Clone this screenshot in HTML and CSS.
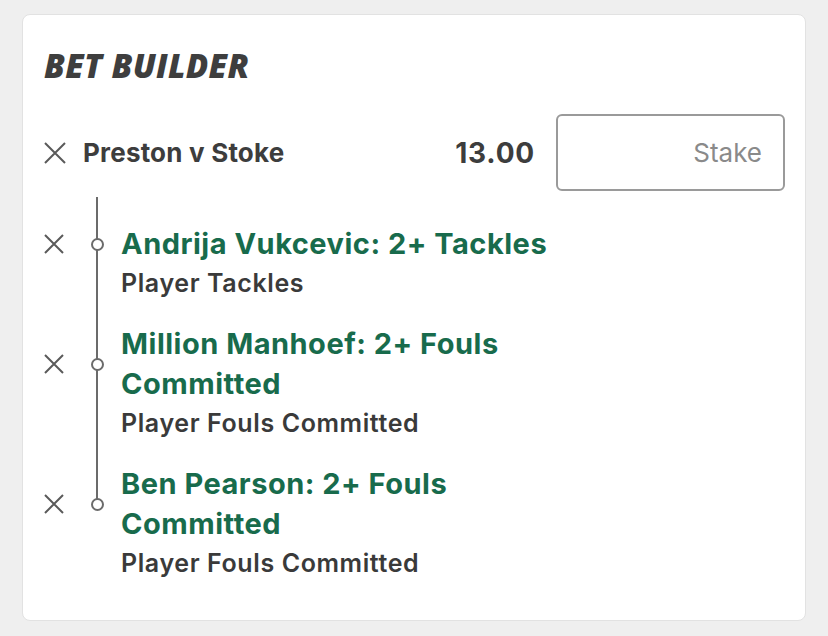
FILE: index.html
```html
<!DOCTYPE html>
<html lang="en">
<head>
<meta charset="utf-8">
<title>Bet Builder</title>
<link rel="stylesheet" href="styles.css">
</head>
<body>
<div class="card">
  <h1 class="title">BET BUILDER</h1>
  <div class="event">
    <svg class="x-icon x-lg" viewBox="0 0 22 22" aria-hidden="true"><path d="M1 1L21 21M21 1L1 21"/></svg>
    <span class="event-name">Preston v Stoke</span>
    <span class="odds">13.00</span>
    <div class="stake"><span class="stake-ph">Stake</span></div>
  </div>
  <div class="legs">
    <div class="leg">
      <svg class="x-icon x-sm" viewBox="0 0 20 20" aria-hidden="true"><path d="M1 1L19 19M19 1L1 19"/></svg>
      <span class="dot"></span>
      <div class="leg-title">Andrija Vukcevic: 2+ Tackles</div>
      <div class="leg-sub">Player Tackles</div>
    </div>
    <div class="leg">
      <svg class="x-icon x-sm" viewBox="0 0 20 20" aria-hidden="true"><path d="M1 1L19 19M19 1L1 19"/></svg>
      <span class="dot"></span>
      <div class="leg-title">Million Manhoef: 2+ Fouls Committed</div>
      <div class="leg-sub">Player Fouls Committed</div>
    </div>
    <div class="leg">
      <svg class="x-icon x-sm" viewBox="0 0 20 20" aria-hidden="true"><path d="M1 1L19 19M19 1L1 19"/></svg>
      <span class="dot"></span>
      <div class="leg-title">Ben Pearson: 2+ Fouls Committed</div>
      <div class="leg-sub">Player Fouls Committed</div>
    </div>
  </div>
</div>
</body>
</html>
```
FILE: styles.css
```css
* { box-sizing: border-box; }
html, body { margin: 0; }
body {
  background: #efefef;
  padding: 14px 22px 15px;
  font-family: Inter, "Noto Sans", sans-serif;
  color: #3d3d3d;
}
.card {
  background: #fff;
  border: 1px solid #e2e2e2;
  border-radius: 8px;
  padding: 34px 20px 38px 19px;
}
.title {
  margin: 0 0 0 2px;
  font-family: "Open Sans", sans-serif;
  font-style: italic;
  font-weight: 800;
  font-size: 33px;
  line-height: 33px;
  color: #3e3e3e;
  letter-spacing: 0.3px;
}
.event {
  margin-top: 32px;
  display: flex;
  align-items: center;
  height: 77px;
}
.x-icon path {
  fill: none;
  stroke: #5a5a5a;
  stroke-width: 2;
}
.x-lg { width: 22px; height: 22px; margin-left: 2px; flex: none; }
.event-name {
  margin-left: 17px;
  font-size: 26px;
  font-weight: 700;
  letter-spacing: 0.2px;
  flex: 1;
}
.odds {
  font-size: 28px;
  font-weight: 700;
  letter-spacing: 0.8px;
  margin-right: 21px;
}
.stake {
  width: 229px;
  height: 77px;
  border: 2px solid #9a9a9a;
  border-radius: 6px;
  display: flex;
  align-items: center;
  justify-content: flex-end;
  padding-right: 21px;
}
.stake-ph {
  font-size: 26px;
  color: #8a8a8a;
}
.legs {
  position: relative;
  margin-top: 6px;
  padding-top: 27px;
  display: flex;
  flex-direction: column;
  gap: 22px;
}
.legs::before {
  content: "";
  position: absolute;
  left: 54px;
  top: 0;
  bottom: 78px;
  width: 2px;
  background: #6b6b6b;
}
.leg {
  display: grid;
  grid-template-columns: 45px 20px 1fr;
  column-gap: 0;
}
.x-sm {
  grid-column: 1; grid-row: 1;
  width: 20px; height: 20px;
  margin-left: 2px;
  align-self: center;
}
.dot {
  grid-column: 2; grid-row: 1;
  align-self: center;
  justify-self: center;
  box-sizing: content-box;
  width: 9px; height: 9px;
  border: 2px solid #6b6b6b;
  border-radius: 50%;
  background: #fff;
  position: relative;
  z-index: 1;
}
.leg-title {
  grid-column: 3; grid-row: 1;
  margin-left: 14px;
  max-width: 440px;
  font-size: 29px;
  line-height: 40px;
  font-weight: 700;
  letter-spacing: 0.5px;
  color: #186b4c;
}
.leg-sub {
  grid-column: 3; grid-row: 2;
  margin-left: 14px;
  font-size: 25px;
  line-height: 38px;
  font-weight: 600;
  letter-spacing: 0.6px;
  color: #3a3a3a;
}
```
